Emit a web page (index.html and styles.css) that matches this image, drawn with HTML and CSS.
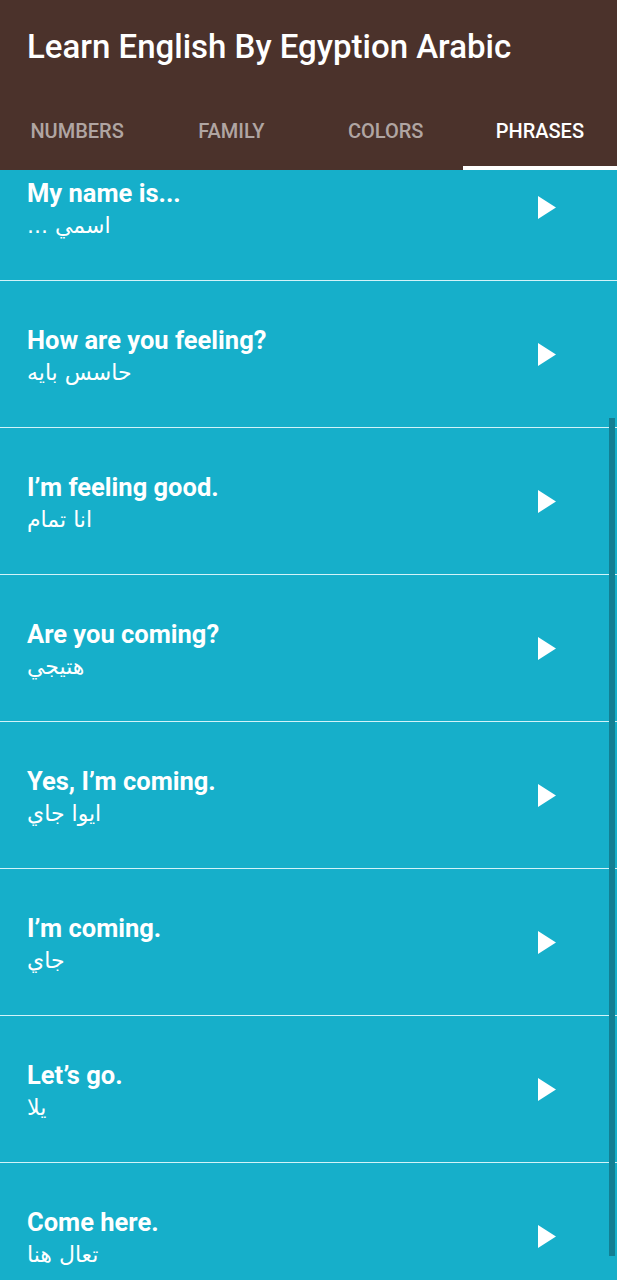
FILE: index.html
```html
<!DOCTYPE html>
<html lang="en">
<head>
<meta charset="utf-8">
<title>Learn English By Egyption Arabic</title>
<link rel="stylesheet" href="styles.css">
</head>
<body>
<div class="app">
  <header class="appbar">
    <h1 class="title">Learn English By Egyption Arabic</h1>
  </header>
  <nav class="tabs">
    <div class="tab">NUMBERS</div>
    <div class="tab">FAMILY</div>
    <div class="tab">COLORS</div>
    <div class="tab active">PHRASES</div>
  </nav>
  <main class="list-wrap">
    <ul class="list">
      <li class="item"><div class="texts"><span class="en">My name is...</span><span class="ar" dir="rtl">اسمي ...</span></div><svg class="play" viewBox="0 0 18 23"><polygon points="0,0 18,11.5 0,23"/></svg></li>
      <li class="item"><div class="texts"><span class="en">How are you feeling?</span><span class="ar" dir="rtl">حاسس بايه</span></div><svg class="play" viewBox="0 0 18 23"><polygon points="0,0 18,11.5 0,23"/></svg></li>
      <li class="item"><div class="texts"><span class="en">I’m feeling good.</span><span class="ar" dir="rtl">انا تمام</span></div><svg class="play" viewBox="0 0 18 23"><polygon points="0,0 18,11.5 0,23"/></svg></li>
      <li class="item"><div class="texts"><span class="en">Are you coming?</span><span class="ar" dir="rtl">هتيجي</span></div><svg class="play" viewBox="0 0 18 23"><polygon points="0,0 18,11.5 0,23"/></svg></li>
      <li class="item"><div class="texts"><span class="en">Yes, I’m coming.</span><span class="ar" dir="rtl">ايوا جاي</span></div><svg class="play" viewBox="0 0 18 23"><polygon points="0,0 18,11.5 0,23"/></svg></li>
      <li class="item"><div class="texts"><span class="en">I’m coming.</span><span class="ar" dir="rtl">جاي</span></div><svg class="play" viewBox="0 0 18 23"><polygon points="0,0 18,11.5 0,23"/></svg></li>
      <li class="item"><div class="texts"><span class="en">Let’s go.</span><span class="ar" dir="rtl">يلا</span></div><svg class="play" viewBox="0 0 18 23"><polygon points="0,0 18,11.5 0,23"/></svg></li>
      <li class="item"><div class="texts"><span class="en">Come here.</span><span class="ar" dir="rtl">تعال هنا</span></div><svg class="play" viewBox="0 0 18 23"><polygon points="0,0 18,11.5 0,23"/></svg></li>
    </ul>
    <div class="scrollbar"></div>
  </main>
</div>
</body>
</html>
```

FILE: styles.css
```css
* { box-sizing: border-box; }
html, body { margin: 0; padding: 0; }
body {
  font-family: Roboto, "Noto Sans", "DejaVu Sans", sans-serif;
  background: #16afca;
  width: 617px;
  height: 1280px;
  overflow: hidden;
}
.app {
  display: flex;
  flex-direction: column;
  height: 1280px;
}
.appbar {
  background: #4b322b;
  height: 91px;
  display: flex;
  align-items: center;
  padding: 0 27px;
  box-shadow: 0 1px 1px rgba(0,0,0,0.12);
  position: relative;
  z-index: 2;
}
.title {
  margin: 0;
  color: #fff;
  font-size: 33px;
  font-weight: 500;
  letter-spacing: 0;
  padding-top: 2px;
}
.tabs {
  background: #4b322b;
  height: 79px;
  display: grid;
  grid-template-columns: repeat(4, 1fr);
  position: relative;
  z-index: 2;
}
.tab {
  display: flex;
  align-items: center;
  justify-content: center;
  color: rgba(255,255,255,0.58);
  font-size: 20px;
  font-weight: 500;
  padding-top: 4px;
  border-bottom: 4px solid transparent;
}
.tab.active {
  color: #fff;
  border-bottom-color: #fff;
}
.list-wrap {
  flex: 1;
  overflow: hidden;
  position: relative;
}
.list {
  list-style: none;
  margin: -36px 0 0;
  padding: 0;
}
.item {
  height: 147px;
  display: flex;
  align-items: center;
  padding-left: 27px;
  border-bottom: 1px solid #d2f3f9;
}
.texts {
  flex: 1;
  display: flex;
  flex-direction: column;
  align-items: flex-start;
  gap: 3px;
  padding-top: 4px;
}
.en {
  color: #fff;
  font-size: 25.5px;
  font-weight: 700;
  line-height: 30px;
  letter-spacing: 0;
}
.ar {
  color: #fff;
  font-family: "DejaVu Sans", "Noto Sans", sans-serif;
  font-size: 22px;
  line-height: 30px;
}
.play {
  width: 18px;
  height: 23px;
  margin-right: 61px;
  fill: #fff;
}
.scrollbar {
  position: absolute;
  right: 2px;
  top: 248px;
  width: 6px;
  height: 838px;
  background: #127f93;
}
```
